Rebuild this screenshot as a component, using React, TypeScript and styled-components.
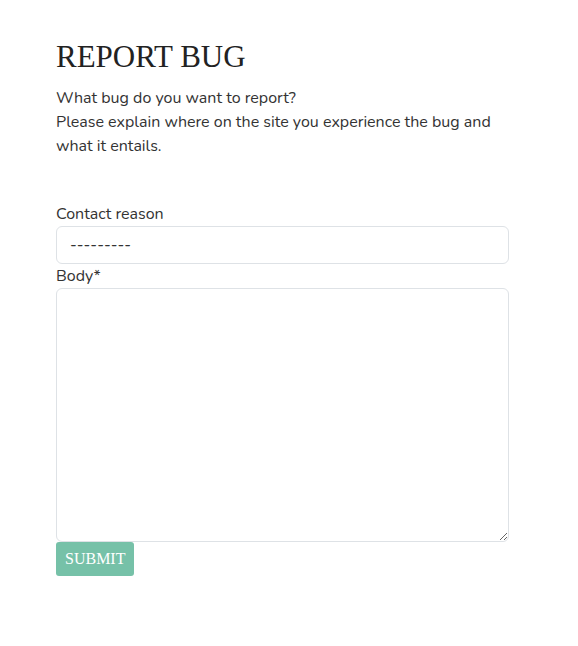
import React from "react";
import styled, { createGlobalStyle } from "styled-components";

const Global = createGlobalStyle`
  html, body { margin: 0; padding: 0; background: #fff; }
  body { font-family: "Nunito", "Lato", "Noto Sans", sans-serif; color: #333; }
  * { box-sizing: border-box; }
`;

const Page = styled.main`
  padding: 37px 0 0 56px;
  width: 509px;
`;

const Title = styled.h1`
  font-family: "Liberation Serif", "Times New Roman", serif;
  font-weight: 400;
  font-size: 31px;
  line-height: 40px;
  color: #222;
  margin: 0 0 9px;
`;

const Intro = styled.p`
  font-size: 16px;
  line-height: 24px;
  margin: 0 0 44px;
  color: #333;
`;

const Form = styled.form`
  display: flex;
  flex-direction: column;
  align-items: flex-start;
`;

const Label = styled.label`
  font-size: 16px;
  line-height: 24px;
  color: #333;
`;

const Select = styled.select`
  width: 100%;
  height: 38px;
  border: 1px solid #dee2e6;
  border-radius: 6px;
  background: #fff;
  padding: 0 13px;
  font-family: inherit;
  font-size: 16px;
  color: #333;
  appearance: none;
`;

const TextArea = styled.textarea`
  width: 100%;
  height: 254px;
  border: 1px solid #dee2e6;
  border-radius: 6px;
  background: #fff;
  font-family: inherit;
  font-size: 16px;
  margin: 0;
  display: block;
`;

const Submit = styled.button`
  background: #76c1a8;
  color: #fff;
  border: none;
  border-radius: 3px;
  font-family: "Liberation Serif", "Times New Roman", serif;
  font-size: 16px;
  height: 34px;
  padding: 0 9px;
`;

export default function App() {
  return (
    <>
      <Global />
      <Page>
        <Title>REPORT BUG</Title>
        <Intro>
          What bug do you want to report?
          <br />
          Please explain where on the site you experience the bug and what it entails.
        </Intro>
        <Form>
          <Label htmlFor="reason">Contact reason</Label>
          <Select id="reason" defaultValue="">
            <option value="">---------</option>
          </Select>
          <Label htmlFor="body">Body*</Label>
          <TextArea id="body" />
          <Submit type="button">SUBMIT</Submit>
        </Form>
      </Page>
    </>
  );
}
